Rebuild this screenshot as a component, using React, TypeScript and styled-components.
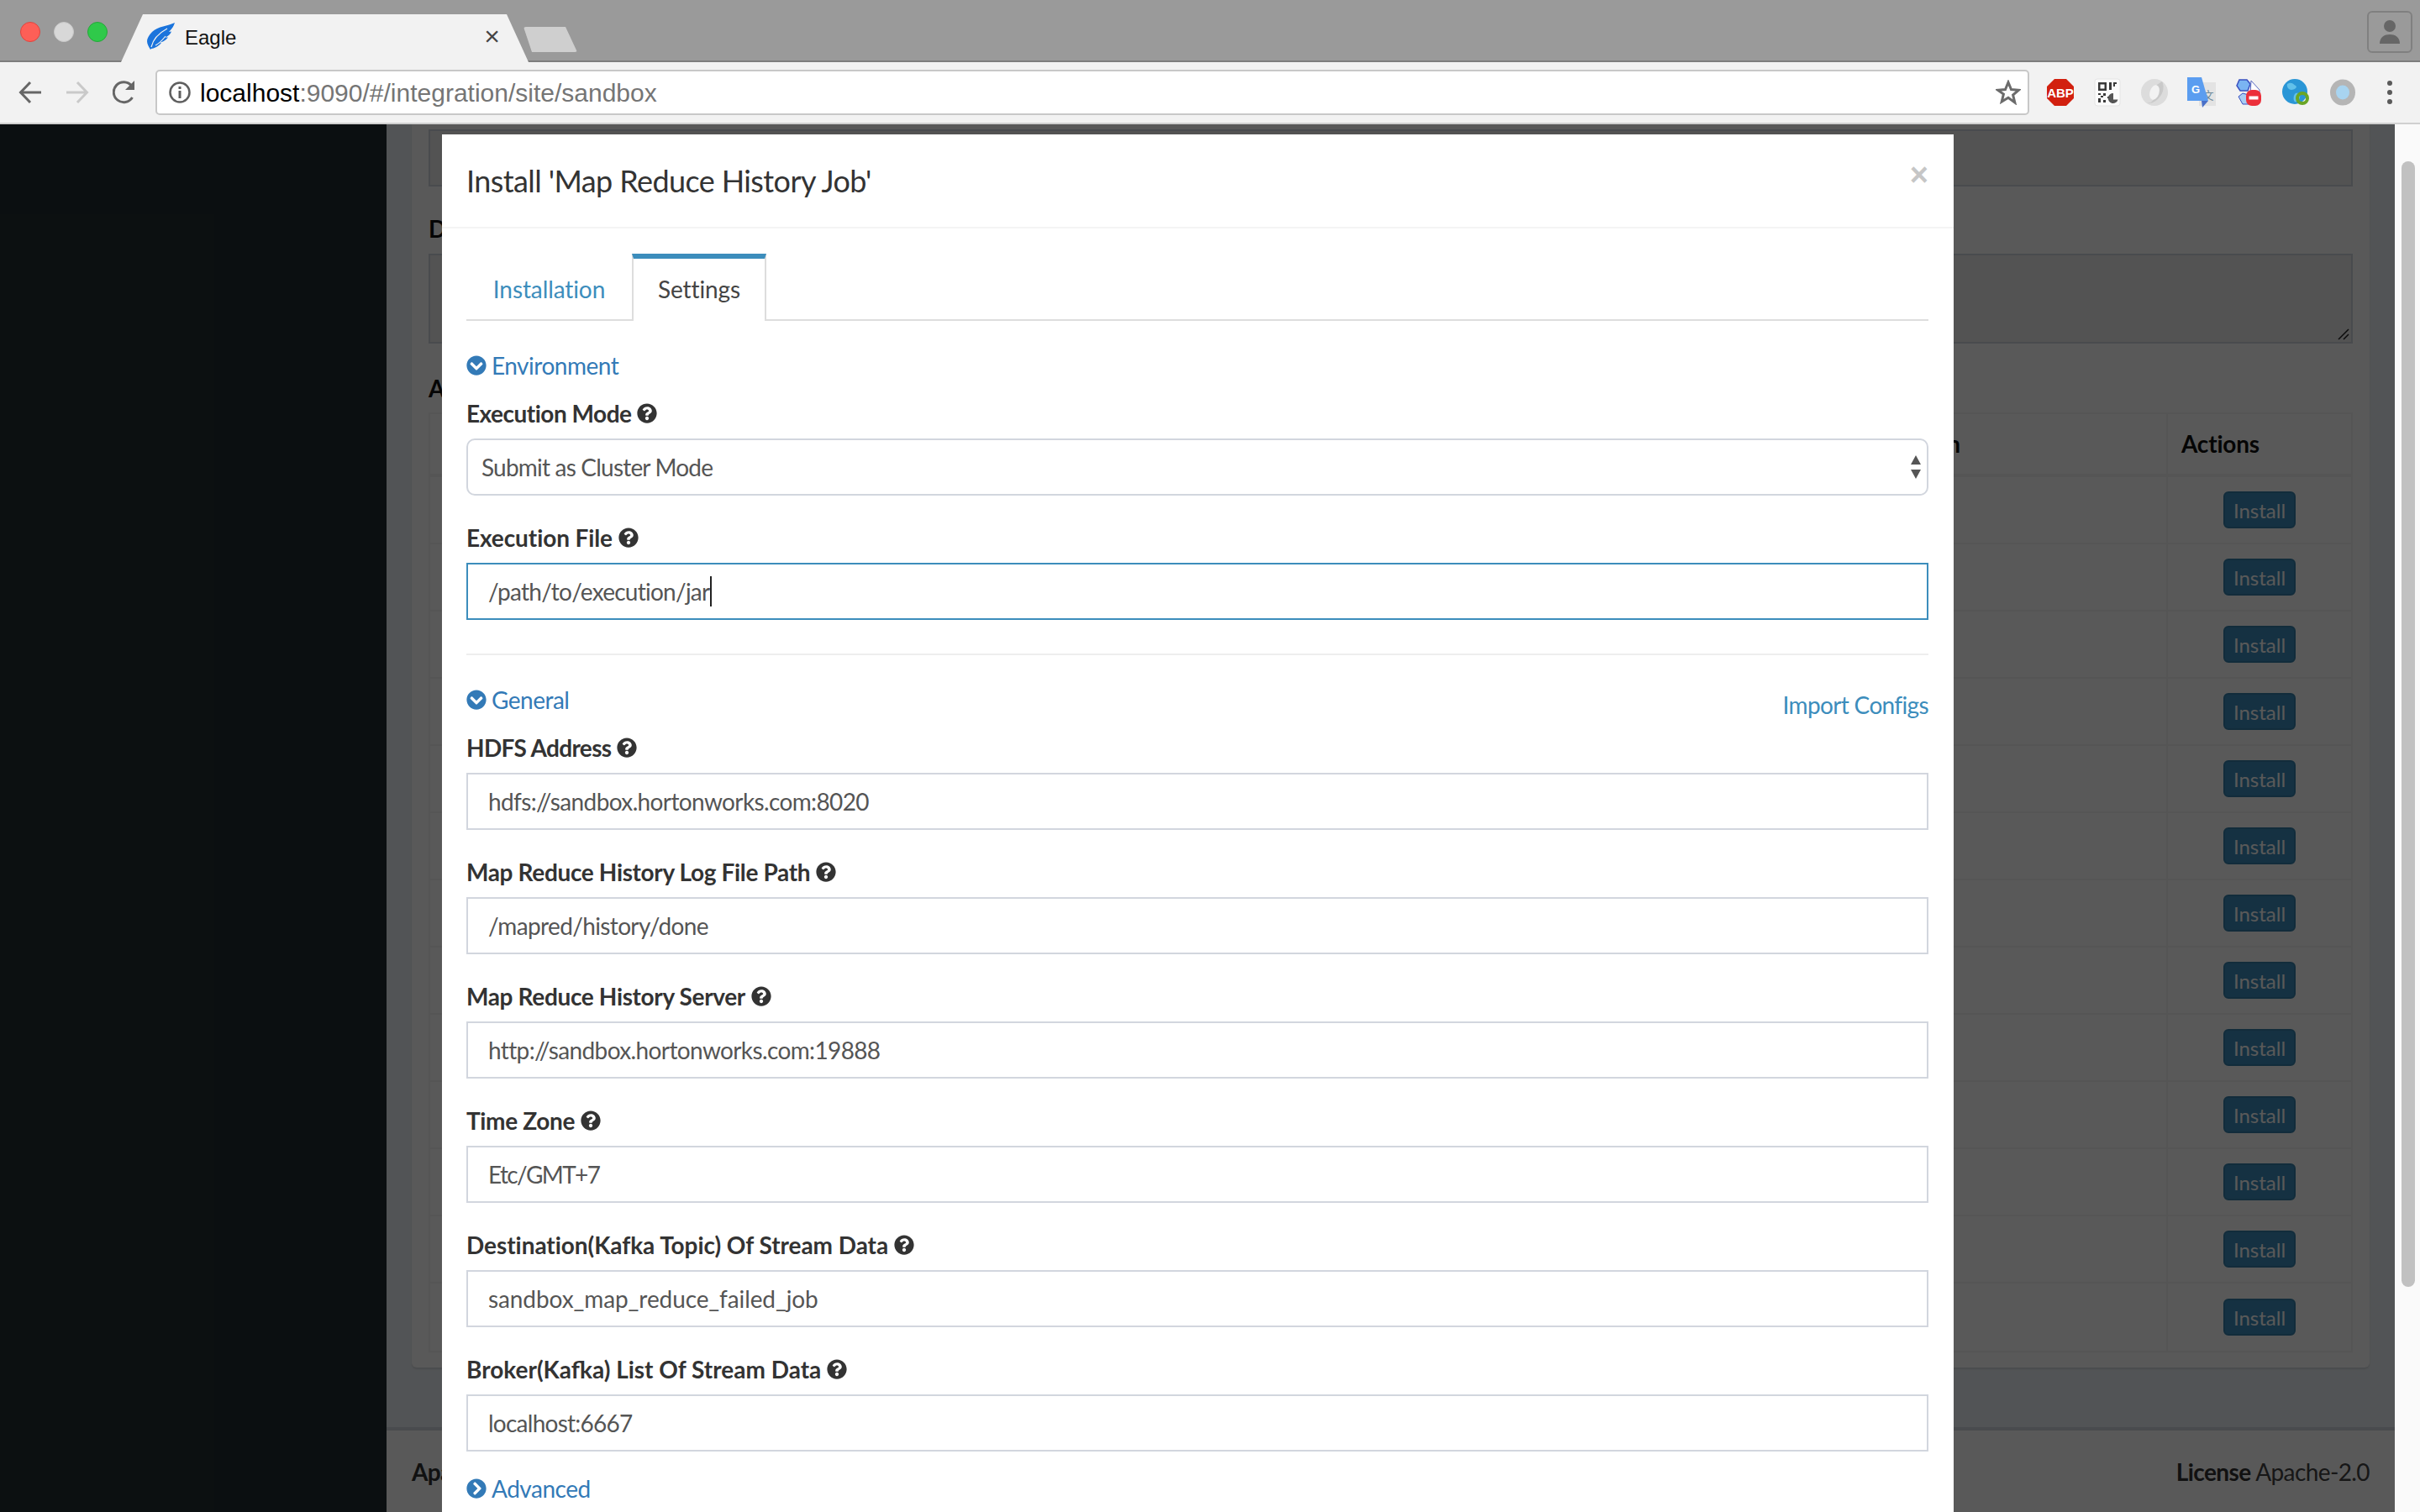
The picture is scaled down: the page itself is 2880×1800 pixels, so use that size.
import React from 'react';
import styled, { createGlobalStyle } from 'styled-components';
import { FaChevronCircleDown, FaChevronCircleRight, FaQuestionCircle } from 'react-icons/fa';

const SANS = `Lato, "Open Sans", sans-serif`;

const GlobalStyle = createGlobalStyle`
    html, body { margin: 0; padding: 0; height: 1800px; overflow: hidden; background: #ecf0f5; }
    * { box-sizing: border-box; }
`;

const fields = [
    { label: 'HDFS Address', labelSpacing: -0.65, value: 'hdfs://sandbox.hortonworks.com:8020', spacing: -0.63 },
    { label: 'Map Reduce History Log File Path', labelSpacing: -0.35, value: '/mapred/history/done', spacing: -0.63 },
    { label: 'Map Reduce History Server', labelSpacing: -0.35, value: 'http://sandbox.hortonworks.com:19888', spacing: -0.63 },
    { label: 'Time Zone', labelSpacing: -0.35, value: 'Etc/GMT+7', spacing: -1.6 },
    { label: 'Destination(Kafka Topic) Of Stream Data', labelSpacing: -0.05, value: 'sandbox_map_reduce_failed_job', spacing: -0.1 },
    { label: 'Broker(Kafka) List Of Stream Data', labelSpacing: 0, value: 'localhost:6667', spacing: -0.75 },
];

const rows = Array.from({ length: 13 }, (_, i) => i);

function ExtensionIcons() {
    return (
        <Extensions>
            <svg width="34" height="34" viewBox="0 0 34 34">
                <polygon points="10,1 24,1 33,10 33,24 24,33 10,33 1,24 1,10" fill="#d2200f" />
                <text x="17" y="22.500" textAnchor="middle" fontFamily="Liberation Sans" fontWeight="700" fontSize="15" fill="#fff">ABP</text>
            </svg>
            <svg width="32" height="34" viewBox="0 0 32 34">
                <rect x="1" y="1" width="30" height="32" rx="3" fill="#fbfbfb" stroke="#e4e4e4" />
                <path d="M5 5h10v10H5zM7.500 7.500v5h5v-5zM18 5h3v9h-3zM23 5h4v2h-2v3h-2zM5 18h3v2H5zM11 18h3v3h-3zM8 21h3v2H8zM5 24h3v5H5zM11 26h3v3h-3zM16 22h2v2h-2z" fill="#3a3a3a" fillRule="evenodd" />
                <path d="M23 18a6 6 0 1 0 5.500 7.500H23z" fill="#555" />
            </svg>
            <svg width="34" height="34" viewBox="0 0 34 34">
                <circle cx="17" cy="17" r="16" fill="#dcdcdc" />
                <path d="M26 4c3 5 2 14-4 20s-12 7-15 5c5 2 9-2 11-7s4-8 1-13c2-2 5-4 7-5z" fill="#c9c9c9" />
                <ellipse cx="17" cy="17" rx="5.500" ry="9" transform="rotate(18 17 17)" fill="#f2f2f2" />
            </svg>
            <svg width="34" height="36" viewBox="0 0 34 36">
                <rect x="14" y="6" width="20" height="28" fill="#e3e3e3" />
                <text x="25" y="26" textAnchor="middle" fontFamily="Noto Sans CJK SC" fontSize="13" fill="#6d8a9a">文</text>
                <path d="M0 0h17l8 28H0z" fill="#5b9df0" />
                <path d="M17 28h8l-7 8z" fill="#4a70c8" />
                <text x="10" y="19" textAnchor="middle" fontFamily="Liberation Sans" fontWeight="700" fontSize="13" fill="#fff">G</text>
            </svg>
            <svg width="30" height="32" viewBox="0 0 30 32">
                <path d="M4 1h9l4 5-3 8H5L1 8z" fill="#7ab4f2" stroke="#3a50c0" strokeWidth="1.500" />
                <path d="M18 2l10 11v6H17z" fill="#fff" stroke="#5a6ac0" />
                <path d="M3 21l5-4 7 2 1 11H8z" fill="#a8cdf5" stroke="#3a50c0" />
                <rect x="12" y="13" width="18" height="19" rx="7" fill="#ec2f3a" />
                <rect x="15.500" y="20.500" width="11" height="4" fill="#fff" />
            </svg>
            <svg width="32" height="32" viewBox="0 0 32 32">
                <circle cx="15" cy="15" r="15" fill="#2a96d6" />
                <path d="M6 6c5-3 7 0 10 2s-2 5-5 5-6-3-5-7zM16 17c4-1 6 1 5 5s-4 6-6 5-2-8 1-10z" fill="#62c1ea" />
                <circle cx="24" cy="23" r="6" fill="none" stroke="#6aa626" strokeWidth="4" />
            </svg>
            <svg width="30" height="32" viewBox="0 0 30 32">
                <ellipse cx="15" cy="16" rx="15" ry="15.500" fill="#b5b5b5" />
                <ellipse cx="15" cy="16" rx="8" ry="8.500" fill="#a8d4f0" />
            </svg>
            <KebabDots><span /><span /><span /></KebabDots>
        </Extensions>
    );
}

function Label({ children, spacing }: { children: React.ReactNode; spacing: number }) {
    return (
        <FieldLabel $spacing={spacing}>
            {children} <FaQuestionCircle />
        </FieldLabel>
    );
}

export default function App() {
    return (
        <Screen>
            <GlobalStyle />
            <TabStrip>
                <TrafficLights>
                    <Light color="#fd5f57" edge="#e0443e" />
                    <Light color="#d8d8d8" edge="#c8c8c8" />
                    <Light color="#2fc94a" edge="#25a83a" />
                </TrafficLights>
                <Tab>
                    <svg width="33" height="33" viewBox="0 0 33 33">
                        <path d="M33 0C25 4 13 4 6 11 2 15 0 19 0 22c0 3 2 7 4 10l1-1c3 0 9-3 12-7l-4 .5c4-1 9-3 12-7l-4 0c4-1 7-4 8-7l-3 .5C29 8 32 4 33 0z" fill="#1b74dc" />
                        <path d="M5 29C7 20 13 13 24 7M10 27c4-2 8-6 12-11" fill="none" stroke="#f2f2f2" strokeWidth="1.200" />
                    </svg>
                    <TabTitle>Eagle</TabTitle>
                    <TabClose>×</TabClose>
                </Tab>
                <NewTab />
                <ProfileButton>
                    <svg width="26" height="30" viewBox="0 0 26 30">
                        <circle cx="13" cy="8" r="7" fill="#666" />
                        <path d="M1 29c0-8 6-11 12-11s12 3 12 11z" fill="#666" />
                    </svg>
                </ProfileButton>
            </TabStrip>
            <Toolbar>
                <NavIcons>
                    <svg width="28" height="28" viewBox="0 0 28 28" fill="none" stroke="#666" strokeWidth="3">
                        <path d="M27 14H3M14 2 2.500 14 14 26" />
                    </svg>
                    <svg width="28" height="28" viewBox="0 0 28 28" fill="none" stroke="#c9c9c9" strokeWidth="3">
                        <path d="M1 14h24M14 2l11.500 12L14 26" />
                    </svg>
                    <svg width="28" height="30" viewBox="0 0 28 30" fill="none">
                        <path d="M23.500 21a12 12 0 1 1-1-14" stroke="#666" strokeWidth="3" />
                        <path d="M26 1v11H15z" fill="#666" />
                    </svg>
                </NavIcons>
                <Omnibox>
                    <svg width="26" height="26" viewBox="0 0 26 26">
                        <circle cx="13" cy="13" r="11.500" fill="none" stroke="#5f5f5f" strokeWidth="2.500" />
                        <rect x="11.500" y="11" width="3" height="9" fill="#5f5f5f" />
                        <rect x="11.500" y="6" width="3" height="3" fill="#5f5f5f" />
                    </svg>
                    <UrlText><strong>localhost</strong>:9090/#/integration/site/sandbox</UrlText>
                    <StarIcon width="30" height="30" viewBox="0 0 30 30">
                        <path d="M15 3l3.500 8.500 9 .7-6.900 5.900 2.200 8.900L15 21.300 7.200 26l2.200-8.900L2.500 12.200l9-.7z" fill="none" stroke="#6b6b6b" strokeWidth="3" />
                    </StarIcon>
                </Omnibox>
                <ExtensionIcons />
            </Toolbar>
            <Viewport>
                <PageArea>
                    <Sidebar />
                    <Content>
                        <Card>
                            <DisabledInput />
                            <BackLabel $top={30}>Description</BackLabel>
                            <DisabledArea>
                                <svg width="14" height="14" viewBox="0 0 14 14" stroke="#222" strokeWidth="1.500">
                                    <path d="M13 1 1 13M13 7l-6 6" />
                                </svg>
                            </DisabledArea>
                            <BackLabel $top={33}>Applications</BackLabel>
                            <AppTable>
                                <HeaderRow>
                                    <HeaderCell>Description</HeaderCell>
                                    <ActionsHead>Actions</ActionsHead>
                                </HeaderRow>
                                {rows.map((r) => (
                                    <Row key={r}>
                                        <div />
                                        <ActionCell><InstallButton>Install</InstallButton></ActionCell>
                                    </Row>
                                ))}
                            </AppTable>
                        </Card>
                        <Footer>
                            <strong>Apache Eagle</strong>
                            <span><strong>License</strong> Apache-2.0</span>
                        </Footer>
                    </Content>
                    <Overlay>
                        <Modal>
                            <ModalHeader>
                                <ModalTitle>Install 'Map Reduce History Job'</ModalTitle>
                                <CloseMark>×</CloseMark>
                            </ModalHeader>
                            <ModalBody>
                                <TabBar>
                                    <InactiveTab>Installation</InactiveTab>
                                    <ActiveTab>Settings</ActiveTab>
                                </TabBar>
                                <SectionRow>
                                    <SectionLink><FaChevronCircleDown /> Environment</SectionLink>
                                </SectionRow>
                                <Group>
                                    <Label spacing={-0.5}>Execution Mode</Label>
                                    <SelectBox>
                                        Submit as Cluster Mode
                                        <svg width="14" height="30" viewBox="0 0 14 30" fill="#555">
                                            <path d="M7 1l6 11H1zM1 18h12l-6 11z" />
                                        </svg>
                                    </SelectBox>
                                </Group>
                                <Group>
                                    <Label spacing={-0.1}>Execution File</Label>
                                    <TextField $focused $spacing={-0.75}>/path/to/execution/jar<Caret /></TextField>
                                </Group>
                                <Divider />
                                <SectionRow>
                                    <SectionLink><FaChevronCircleDown /> General</SectionLink>
                                    <ImportLink>Import Configs</ImportLink>
                                </SectionRow>
                                {fields.map((f) => (
                                    <Group key={f.label}>
                                        <Label spacing={f.labelSpacing}>{f.label}</Label>
                                        <TextField $spacing={f.spacing}>{f.value}</TextField>
                                    </Group>
                                ))}
                                <AdvancedRow>
                                    <SectionLink><FaChevronCircleRight /> Advanced</SectionLink>
                                </AdvancedRow>
                            </ModalBody>
                        </Modal>
                    </Overlay>
                </PageArea>
                <ScrollTrack><ScrollThumb /></ScrollTrack>
            </Viewport>
        </Screen>
    );
}

const Screen = styled.div`
    width: 2880px;
    height: 1800px;
    display: flex;
    flex-direction: column;
    overflow: hidden;
    font-family: ${SANS};
`;

const TabStrip = styled.div`
    height: 74px;
    flex: none;
    position: relative;
    display: flex;
    align-items: flex-end;
    padding-left: 24px;
    background: #9a9a9a;
    border-bottom: 2px solid #7d7d7d;
`;

const TrafficLights = styled.div`
    position: absolute;
    left: 24px;
    top: 26px;
    display: flex;
    gap: 16px;
`;

const Light = styled.span<{ color: string; edge: string }>`
    width: 24px;
    height: 24px;
    border-radius: 50%;
    background: ${(p) => p.color};
    border: 1px solid ${(p) => p.edge};
`;

const Tab = styled.div`
    width: 485px;
    height: 57px;
    margin-left: 120px;
    margin-bottom: -2px;
    display: flex;
    align-items: center;
    padding: 0 34px 4px 31px;
    background: #f2f2f2;
    clip-path: polygon(0 100%, 26px 0, 459px 0, 100% 100%);
`;

const TabTitle = styled.span`
    flex: 1;
    margin: 3px 0 0 12px;
    font: 24px "Liberation Sans", sans-serif;
    color: #111;
`;

const TabClose = styled.span`
    font: 32px "Liberation Sans", sans-serif;
    color: #444;
`;

const NewTab = styled.div`
    width: 64px;
    height: 30px;
    margin: 0 0 10px -6px;
    background: #cfcfcf;
    border-radius: 3px;
    clip-path: polygon(0 0, 50px 0, 100% 100%, 10px 100%);
`;

const ProfileButton = styled.div`
    position: absolute;
    left: 2817px;
    top: 13px;
    width: 54px;
    height: 50px;
    display: flex;
    align-items: center;
    justify-content: center;
    border: 2px solid #808080;
    border-radius: 6px;
`;

const Toolbar = styled.div`
    height: 74px;
    flex: none;
    display: flex;
    align-items: center;
    padding: 0 0 0 21px;
    background: #f2f2f2;
    border-bottom: 2px solid #d0d0d0;
`;

const NavIcons = styled.div`
    width: 164px;
    display: flex;
    align-items: center;
    gap: 28px;
    padding-left: 1px;
`;

const Omnibox = styled.div`
    width: 2230px;
    height: 54px;
    display: flex;
    align-items: center;
    padding: 0 8px 0 14px;
    background: #fff;
    border: 2px solid #c8c8c8;
    border-radius: 5px;
`;

const UrlText = styled.div`
    flex: 1;
    margin: 2px 0 0 11px;
    font: 30px "Liberation Sans", sans-serif;
    color: #757575;
    & strong {
        font-weight: 400;
        color: #000;
    }
`;

const StarIcon = styled.svg`
    flex: none;
`;

const Extensions = styled.div`
    display: grid;
    grid-template-columns: repeat(8, 56px);
    justify-items: center;
    align-items: center;
    margin-left: 9px;
`;

const KebabDots = styled.div`
    display: flex;
    flex-direction: column;
    gap: 5px;
    & span {
        width: 6px;
        height: 6px;
        border-radius: 50%;
        background: #5a5a5a;
    }
`;

const Viewport = styled.div`
    flex: 1;
    min-height: 0;
    display: flex;
`;

const PageArea = styled.div`
    flex: 1;
    position: relative;
    display: flex;
    background: #ecf0f5;
`;

const Sidebar = styled.div`
    width: 460px;
    flex: none;
    background: #222d32;
`;

const Content = styled.div`
    flex: 1;
    display: flex;
    flex-direction: column;
    color: #333;
    font-size: 28px;
`;

const Card = styled.div`
    margin: 0 30px;
    height: 1480px;
    flex: none;
    padding: 6px 20px 0;
    background: #fff;
    border-radius: 0 0 6px 6px;
    box-shadow: 0 2px 2px rgba(0, 0, 0, 0.1);
`;

const DisabledInput = styled.div`
    height: 68px;
    background: #eee;
    border: 2px solid #d2d6de;
`;

const DisabledArea = styled.div`
    height: 107px;
    margin-top: 10px;
    display: flex;
    align-items: flex-end;
    justify-content: flex-end;
    padding: 0 2px 2px 0;
    background: #eee;
    border: 2px solid #d2d6de;
`;

const BackLabel = styled.div<{ $top: number }>`
    margin-top: ${(p) => p.$top}px;
    line-height: 40px;
    font-weight: 700;
    color: #111;
`;

const AppTable = styled.div`
    margin-top: 9px;
    border: 2px solid #f4f4f4;
`;

const HeaderRow = styled.div`
    height: 75px;
    display: grid;
    grid-template-columns: 1fr 220px;
    border-bottom: 4px solid #f4f4f4;
    font-weight: 700;
    color: #111;
`;

const HeaderCell = styled.div`
    line-height: 70px;
    text-align: right;
    padding-right: 245px;
`;

const ActionsHead = styled.div`
    line-height: 70px;
    padding-left: 16px;
    letter-spacing: -0.2px;
    border-left: 2px solid #f4f4f4;
`;

const Row = styled.div`
    height: 80px;
    display: grid;
    grid-template-columns: 1fr 220px;
    border-bottom: 2px solid #f4f4f4;
    &:last-child {
        border-bottom: 0;
    }
`;

const ActionCell = styled.div`
    display: flex;
    align-items: center;
    padding-left: 66px;
    border-left: 2px solid #f4f4f4;
`;

const InstallButton = styled.div`
    width: 86px;
    height: 44px;
    text-align: center;
    line-height: 42px;
    font-size: 24px;
    color: #fff;
    background: #3c8dbc;
    border: 2px solid #367fa9;
    border-radius: 6px;
`;

const Footer = styled.div`
    flex: 1;
    margin-top: 71px;
    display: flex;
    align-items: center;
    justify-content: space-between;
    padding: 0 30px 0 30px;
    background: #fff;
    border-top: 4px solid #d2d6de;
    color: #444;
    letter-spacing: -0.6px;
    & strong {
        color: #333;
    }
`;

const Overlay = styled.div`
    position: absolute;
    inset: 0;
    display: flex;
    justify-content: center;
    padding: 12px 0 0 1px;
    background: rgba(0, 0, 0, 0.65);
`;

const Modal = styled.div`
    width: 1799px;
    height: 1700px;
    background: #fff;
`;

const ModalHeader = styled.div`
    height: 112px;
    display: flex;
    align-items: center;
    justify-content: space-between;
    padding: 0 30px 0 29px;
    border-bottom: 2px solid #f4f4f4;
`;

const ModalTitle = styled.div`
    font-size: 36px;
    letter-spacing: -0.6px;
    color: #333;
`;

const CloseMark = styled.div`
    margin-bottom: 14px;
    font: 700 38px "Liberation Sans", sans-serif;
    color: #c6c6c6;
`;

const ModalBody = styled.div`
    padding: 30px 30px 0 29px;
    font-size: 28px;
`;

const TabBar = styled.div`
    height: 80px;
    display: flex;
    align-items: flex-end;
    border-bottom: 2px solid #ddd;
`;

const InactiveTab = styled.div`
    width: 197px;
    height: 72px;
    padding-top: 12px;
    margin-bottom: -2px;
    text-align: center;
    line-height: 44px;
    letter-spacing: -0.1px;
    color: #3c8dbc;
`;

const ActiveTab = styled.div`
    width: 160px;
    height: 80px;
    margin-bottom: -2px;
    text-align: center;
    line-height: 72px;
    letter-spacing: -0.1px;
    color: #444;
    background: #fff;
    border-top: 6px solid #3c8dbc;
    border-left: 2px solid #ddd;
    border-right: 2px solid #ddd;
`;

const SectionRow = styled.div`
    margin: 33px 0 17px;
    display: flex;
    align-items: flex-start;
    justify-content: space-between;
    line-height: 40px;
`;

const AdvancedRow = styled(SectionRow)`
    margin-top: -6px;
`;

const SectionLink = styled.div`
    display: flex;
    align-items: center;
    gap: 6px;
    letter-spacing: -0.5px;
    color: #337ab7;
    & svg {
        font-size: 24px;
    }
`;

const ImportLink = styled.div`
    margin: 6px 0 -6px;
    letter-spacing: -0.65px;
    color: #3c8dbc;
`;

const Group = styled.div`
    margin-bottom: 30px;
`;

const FieldLabel = styled.div<{ $spacing: number }>`
    display: flex;
    align-items: center;
    gap: 7px;
    height: 40px;
    margin-bottom: 10px;
    font-weight: 700;
    letter-spacing: ${(p) => p.$spacing}px;
    color: #333;
    & svg {
        font-size: 24px;
    }
`;

const SelectBox = styled.div`
    height: 68px;
    display: flex;
    align-items: center;
    justify-content: space-between;
    padding: 0 6px 0 16px;
    letter-spacing: -0.8px;
    color: #555;
    border: 2px solid #d2d6de;
    border-radius: 10px;
`;

const TextField = styled.div<{ $focused?: boolean; $spacing?: number }>`
    height: 68px;
    display: flex;
    align-items: center;
    padding: 0 24px;
    letter-spacing: ${(p) => p.$spacing ?? 0}px;
    color: #555;
    border: 2px solid ${(p) => (p.$focused ? '#3c8dbc' : '#d2d6de')};
`;

const Caret = styled.span`
    width: 2px;
    height: 36px;
    margin-left: 1px;
    background: #222;
`;

const Divider = styled.div`
    height: 2px;
    margin-top: 40px;
    background: #eee;
`;

const ScrollTrack = styled.div`
    width: 30px;
    flex: none;
    padding: 44px 6px 0 8px;
    background: #fafafa;
`;

const ScrollThumb = styled.div`
    height: 1340px;
    background: #c1c1c1;
    border-radius: 8px;
`;
